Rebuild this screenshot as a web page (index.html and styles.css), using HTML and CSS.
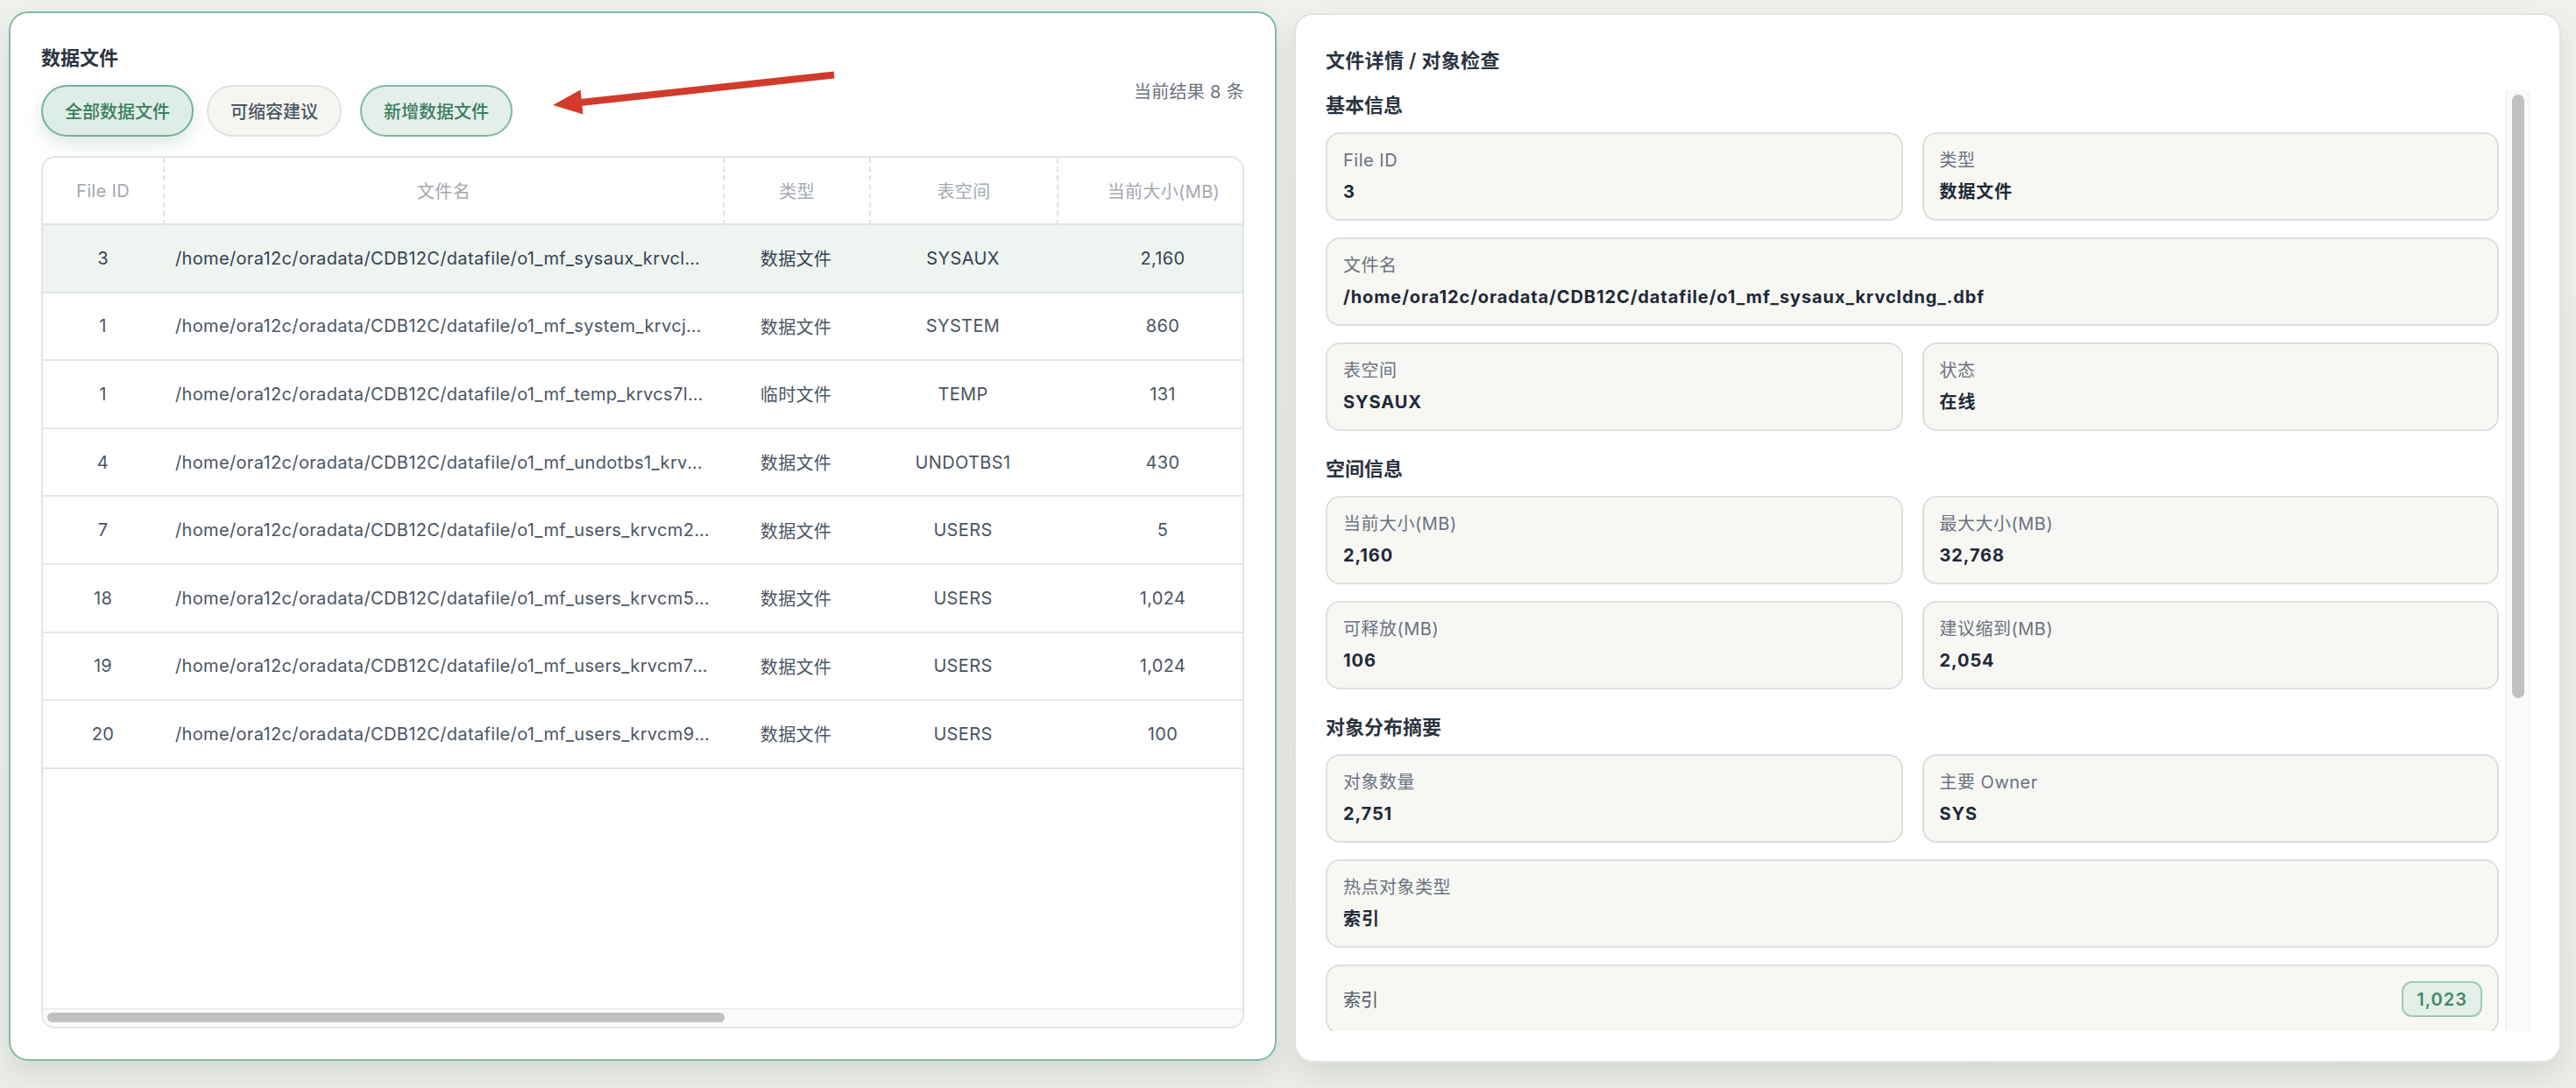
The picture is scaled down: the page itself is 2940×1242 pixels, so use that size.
FILE: index.html
```html
<!DOCTYPE html>
<html lang="zh-CN">
<head>
<meta charset="utf-8">
<title>数据文件</title>
<link rel="stylesheet" href="styles.css">
</head>
<body>
<div class="layout">
  <section class="panel panel--files">
    <div class="files-head">
      <div class="files-head__left">
        <h2 class="title">数据文件</h2>
        <div class="chips">
          <button class="chip chip--active">全部数据文件</button>
          <button class="chip chip--plain">可缩容建议</button>
          <button class="chip chip--green">新增数据文件</button>
        </div>
      </div>
      <div class="count">当前结果 8 条</div>
    </div>
    <div class="table-wrap">
      <div class="table-scroll">
        <table class="files-table">
          <colgroup>
            <col class="c-id"><col class="c-name"><col class="c-type"><col class="c-ts"><col class="c-size">
          </colgroup>
          <thead>
            <tr>
              <th>File ID</th><th>文件名</th><th>类型</th><th>表空间</th><th>当前大小(MB)</th>
            </tr>
          </thead>
          <tbody>
            <tr class="is-selected"><td>3</td><td class="name">/home/ora12c/oradata/CDB12C/datafile/o1_mf_sysaux_krvcldng_.dbf</td><td>数据文件</td><td>SYSAUX</td><td>2,160</td></tr>
            <tr><td>1</td><td class="name">/home/ora12c/oradata/CDB12C/datafile/o1_mf_system_krvcj9xq_.dbf</td><td>数据文件</td><td>SYSTEM</td><td>860</td></tr>
            <tr><td>1</td><td class="name">/home/ora12c/oradata/CDB12C/datafile/o1_mf_temp_krvcs7lh_.tmp</td><td>临时文件</td><td>TEMP</td><td>131</td></tr>
            <tr><td>4</td><td class="name">/home/ora12c/oradata/CDB12C/datafile/o1_mf_undotbs1_krvcldnz_.dbf</td><td>数据文件</td><td>UNDOTBS1</td><td>430</td></tr>
            <tr><td>7</td><td class="name">/home/ora12c/oradata/CDB12C/datafile/o1_mf_users_krvcm2qd_.dbf</td><td>数据文件</td><td>USERS</td><td>5</td></tr>
            <tr><td>18</td><td class="name">/home/ora12c/oradata/CDB12C/datafile/o1_mf_users_krvcm5tw_.dbf</td><td>数据文件</td><td>USERS</td><td>1,024</td></tr>
            <tr><td>19</td><td class="name">/home/ora12c/oradata/CDB12C/datafile/o1_mf_users_krvcm7pb_.dbf</td><td>数据文件</td><td>USERS</td><td>1,024</td></tr>
            <tr><td>20</td><td class="name">/home/ora12c/oradata/CDB12C/datafile/o1_mf_users_krvcm9ke_.dbf</td><td>数据文件</td><td>USERS</td><td>100</td></tr>
          </tbody>
        </table>
      </div>
      <div class="hscroll"><div class="hscroll__thumb"></div></div>
    </div>
  </section>

  <section class="panel panel--detail">
    <h2 class="detail-title">文件详情 / 对象检查</h2>
    <div class="detail-body">
      <div class="detail-scroll">
        <div class="section">
          <h3 class="section-title">基本信息</h3>
          <div class="grid">
            <div class="card"><div class="card-label">File ID</div><div class="card-value">3</div></div>
            <div class="card"><div class="card-label">类型</div><div class="card-value">数据文件</div></div>
            <div class="card card--wide"><div class="card-label">文件名</div><div class="card-value">/home/ora12c/oradata/CDB12C/datafile/o1_mf_sysaux_krvcldng_.dbf</div></div>
            <div class="card"><div class="card-label">表空间</div><div class="card-value">SYSAUX</div></div>
            <div class="card"><div class="card-label">状态</div><div class="card-value">在线</div></div>
          </div>
        </div>
        <div class="section">
          <h3 class="section-title">空间信息</h3>
          <div class="grid">
            <div class="card"><div class="card-label">当前大小(MB)</div><div class="card-value">2,160</div></div>
            <div class="card"><div class="card-label">最大大小(MB)</div><div class="card-value">32,768</div></div>
            <div class="card"><div class="card-label">可释放(MB)</div><div class="card-value">106</div></div>
            <div class="card"><div class="card-label">建议缩到(MB)</div><div class="card-value">2,054</div></div>
          </div>
        </div>
        <div class="section">
          <h3 class="section-title">对象分布摘要</h3>
          <div class="grid">
            <div class="card"><div class="card-label">对象数量</div><div class="card-value">2,751</div></div>
            <div class="card"><div class="card-label">主要 Owner</div><div class="card-value">SYS</div></div>
            <div class="card card--wide"><div class="card-label">热点对象类型</div><div class="card-value">索引</div></div>
            <div class="card list-item"><span class="list-label">索引</span><span class="badge">1,023</span></div>
          </div>
        </div>
      </div>
      <div class="vscroll"><div class="vscroll__thumb"></div></div>
    </div>
  </section>
</div>

<svg class="annotation" width="1000" height="200" viewBox="0 0 1000 200" aria-hidden="true">
  <line x1="952" y1="85.5" x2="658" y2="117.5" stroke="#d13b2b" stroke-width="8"/>
  <polygon points="631,120 662.5,102.5 665.5,130.5" fill="#d13b2b"/>
</svg>
</body>
</html>
```

FILE: styles.css
```css
* { box-sizing: border-box; }

html, body { margin: 0; padding: 0; }

body {
  width: 2940px;
  height: 1242px;
  overflow: hidden;
  position: relative;
  background: linear-gradient(180deg, #eff1ec 0%, #ebeee8 100%);
  font-family: Inter, "Noto Sans CJK SC", "Noto Sans", sans-serif;
  color: #1f2937;
}

.layout {
  display: grid;
  grid-template-columns: 1447px 1446px;
  column-gap: 20px;
  padding: 15px 0 0 10px;
}

.panel {
  height: 1198px;
  background: #ffffff;
  border-radius: 22px;
  display: flex;
  flex-direction: column;
  box-shadow: 0 14px 30px rgba(70, 80, 70, 0.13);
  min-width: 0;
}

.panel--files {
  border: 2px solid #7dbca4;
  padding: 35px;
  transform: translateY(-2px);
}

.panel--detail {
  border: 2px solid #dfe5e0;
  padding: 34px;
}

/* ---------- left: files ---------- */
.files-head {
  display: flex;
  align-items: center;
  justify-content: space-between;
}

.title {
  margin: 0;
  font-size: 22px;
  line-height: 32px;
  font-weight: 600;
  color: #2b3340;
}

.chips {
  display: flex;
  gap: 15px;
  margin-top: 15px;
}

.chip {
  height: 59px;
  padding: 0 25px;
  border-radius: 30px;
  border: 2px solid;
  font-family: inherit;
  font-size: 20px;
  font-weight: 500;
  display: flex;
  align-items: center;
  cursor: pointer;
}

.chip--active {
  background: #deede5;
  border-color: #6fb497;
  color: #3a7d63;
  box-shadow: 0 8px 20px rgba(80, 140, 110, 0.2);
}

.chip--plain {
  background: #f4f6f1;
  border-color: #dfe3dd;
  color: #4b5563;
}

.chip--green {
  margin-left: 6px;
  background: #e3efe8;
  border-color: #7db99f;
  color: #3b7c63;
}

.count {
  font-size: 20px;
  color: #6b7280;
  letter-spacing: 0.3px;
}

.table-wrap {
  flex: 1;
  margin-top: 22px;
  border: 2px solid #e1e5e3;
  border-radius: 16px;
  overflow: hidden;
  display: flex;
  flex-direction: column;
  min-height: 0;
}

.table-scroll {
  flex: 1;
  overflow: hidden;
}

.hscroll {
  height: 21px;
  flex: none;
  background: #fafafa;
  border-top: 1px solid #e6e6e6;
  padding: 4px 5px;
}

.hscroll__thumb {
  width: 773px;
  height: 11px;
  border-radius: 6px;
  background: #c1c1c1;
}

.files-table {
  table-layout: fixed;
  width: 1399px;
  border-collapse: separate;
  border-spacing: 0;
  font-size: 20px;
  letter-spacing: 0.35px;
}

.c-id { width: 137px; }
.c-name { width: 639px; }
.c-type { width: 167px; }
.c-ts { width: 214px; }
.c-size { width: 242px; }

.files-table th {
  height: 77px;
  font-weight: 400;
  color: #a3a9b0;
  text-align: center;
  border-bottom: 2px solid #dde2e0;
  border-left: 2px dashed #dfe3e2;
  white-space: nowrap;
  padding: 0 14px;
}

.files-table th:first-child { border-left: none; }

.files-table td {
  height: 77.6px;
  padding: 0 14px;
  text-align: center;
  color: #4b5563;
  border-bottom: 2px solid #e3e8e6;
  white-space: nowrap;
  overflow: hidden;
  text-overflow: ellipsis;
}

.files-table td.name { text-align: left; }

.files-table tr.is-selected td {
  background: #eef5f1;
  color: #374151;
}

/* ---------- right: detail ---------- */
.detail-title {
  margin: 0;
  font-size: 22px;
  line-height: 36px;
  font-weight: 600;
  color: #2b3340;
  letter-spacing: 0.3px;
}

.detail-body {
  flex: 1;
  min-height: 0;
  margin-top: 16px;
  display: flex;
  gap: 8px;
}

.detail-scroll {
  flex: 1;
  min-width: 0;
  overflow: hidden;
}

.vscroll {
  flex: none;
  width: 27px;
  background: #fafafa;
  border-left: 1px solid #e8e8e8;
  border-right: 1px solid #ededed;
  padding: 5px 5px 0 6px;
}

.vscroll__thumb {
  height: 689px;
  border-radius: 8px;
  background: #c1c1c1;
}

.section + .section { margin-top: 26px; }

.section-title {
  margin: 0 0 14px;
  font-size: 22px;
  line-height: 34px;
  font-weight: 700;
  color: #2b3340;
}

.grid {
  display: grid;
  grid-template-columns: 1fr 1fr;
  gap: 19px 22px;
}

.card {
  background: #f7f8f4;
  border: 2px solid #d9e1dc;
  border-radius: 16px;
  padding: 15px 18px 16px;
  min-width: 0;
}

.card--wide { grid-column: 1 / -1; }

.card-label {
  font-size: 20px;
  line-height: 30px;
  color: #6b7280;
  letter-spacing: 0.5px;
}

.card-value {
  margin-top: 6px;
  font-size: 20px;
  line-height: 30px;
  font-weight: 700;
  color: #1f2937;
  letter-spacing: 0.9px;
}

.list-item {
  grid-column: 1 / -1;
  display: flex;
  align-items: center;
  justify-content: space-between;
  padding: 17px 17px 17px 18px;
}

.list-label {
  font-size: 20px;
  color: #4b5563;
}

.badge {
  height: 41px;
  padding: 0 15px;
  display: flex;
  align-items: center;
  background: #e3efe7;
  border: 2px solid #9fcab5;
  border-radius: 12px;
  color: #3f8a6c;
  font-size: 20px;
  font-weight: 600;
  letter-spacing: 1px;
}

/* annotation arrow overlay */
.annotation {
  position: absolute;
  left: 0;
  top: 0;
  pointer-events: none;
}
```
